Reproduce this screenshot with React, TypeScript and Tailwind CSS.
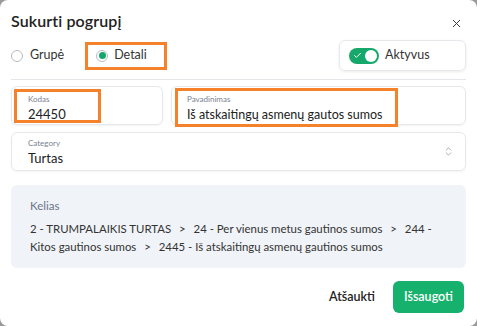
import { X, ChevronsUpDown, Check } from "lucide-react";

const Sep = () => <span className="mx-[5px] text-[#333]">&gt;</span>;

export default function App() {
  return (
    <div className="h-[326px] w-[477px] bg-[#9a9a9a] font-['Lato',sans-serif] text-[#1f2328]">
      <div className="flex h-full w-full flex-col rounded-lg bg-white px-[11px] pt-[9px]">
        <div className="flex items-center justify-between">
          <h2 className="text-[16px] font-semibold tracking-[0.1px] text-[#222]">Sukurti pogrupį</h2>
          <button className="mr-[3px] mt-[4px] text-[#333]">
            <X size={13} strokeWidth={1.8} />
          </button>
        </div>

        <div className="mt-[7px] flex items-center justify-between border-b border-[#e4e6ea] pb-[8px]">
          <div className="flex items-center">
            <label className="flex items-center gap-[7px] text-[12.5px] text-[#333]">
              <span className="h-[12px] w-[12px] rounded-full border border-[#b8bcc2] bg-white" />
              Grupė
            </label>
            <label className="ml-[21px] flex h-[28px] w-[82px] items-center gap-[6px] border-[3px] border-[#f5822a] pl-[8px] text-[12.5px] text-[#333]">
              <span className="flex h-[12px] w-[12px] items-center justify-center rounded-full border border-[#b8bcc2] bg-white">
                <span className="h-[7px] w-[7px] rounded-full bg-[#16a86a]" />
              </span>
              Detali
            </label>
          </div>
          <div className="flex h-[31px] w-[127px] items-center gap-[6px] rounded-md border border-[#e6e8eb] pl-[9px] shadow-[0_1px_3px_rgba(0,0,0,0.08)]">
            <span className="relative flex h-[16px] w-[30px] items-center rounded-full bg-[#16a86a] pl-[4px]">
              <Check size={9} strokeWidth={2.5} className="text-white" />
              <span className="absolute right-[2px] top-[2px] h-[12px] w-[12px] rounded-full bg-white" />
            </span>
            <span className="text-[12.5px] text-[#333]">Aktyvus</span>
          </div>
        </div>

        <div className="mt-[6px] flex gap-[8px]">
          <div className="relative h-[39px] w-[152px] rounded-md border border-[#e6e8eb] shadow-[0_1px_2px_rgba(0,0,0,0.05)]">
            <div className="absolute left-[2px] top-[2px] flex h-[34px] w-[87px] flex-col border-[3px] border-[#f5822a] pl-[11px] pt-[2px]">
              <span className="text-[8px] leading-[10px] text-[#7a8190]">Kodas</span>
              <span className="mt-[3px] text-[13px] leading-[15px] text-[#222]">24450</span>
            </div>
          </div>
          <div className="relative h-[39px] flex-1 rounded-md border border-[#e6e8eb] shadow-[0_1px_2px_rgba(0,0,0,0.05)]">
            <div className="absolute left-[3px] top-[1px] flex h-[39px] w-[223px] flex-col border-[3px] border-[#f5822a] pl-[9px] pt-[3px]">
              <span className="text-[8px] leading-[10px] text-[#7a8190]">Pavadinimas</span>
              <span className="mt-[3px] text-[12.5px] leading-[15px] text-[#222]">Iš atskaitingų asmenų gautos sumos</span>
            </div>
          </div>
        </div>

        <div className="mt-[7px] flex h-[39px] items-center justify-between rounded-md border border-[#e6e8eb] pl-[16px] pr-[11px] shadow-[0_1px_2px_rgba(0,0,0,0.05)]">
          <div className="flex flex-col">
            <span className="text-[8px] leading-[10px] text-[#7a8190]">Category</span>
            <span className="mt-[3px] text-[13px] leading-[15px] text-[#222]">Turtas</span>
          </div>
          <ChevronsUpDown size={11} strokeWidth={1.5} className="text-[#888]" />
        </div>

        <div className="mt-[14px] h-[83px] rounded-md bg-[#f0f3f8] pl-[19px] pt-[12px] text-[11.4px] text-[#333]">
          <div className="text-[11.5px] text-[#6b7687]">Kelias</div>
          <div className="mt-[6px] leading-[18px]">
            <div>
              2 - TRUMPALAIKIS TURTAS <Sep /> 24 - Per vienus metus gautinos sumos <Sep /> 244 -
            </div>
            <div>
              Kitos gautinos sumos <Sep /> 2445 - Iš atskaitingų asmenų gautinos sumos
            </div>
          </div>
        </div>

        <div className="mt-[13px] flex items-center justify-end gap-[18px] pr-[2px]">
          <button className="text-[12.5px] font-semibold text-[#222]">Atšaukti</button>
          <button className="h-[32px] w-[71px] rounded-md bg-[#16b16d] text-[12.5px] font-semibold text-white">Išsaugoti</button>
        </div>
      </div>
    </div>
  );
}
